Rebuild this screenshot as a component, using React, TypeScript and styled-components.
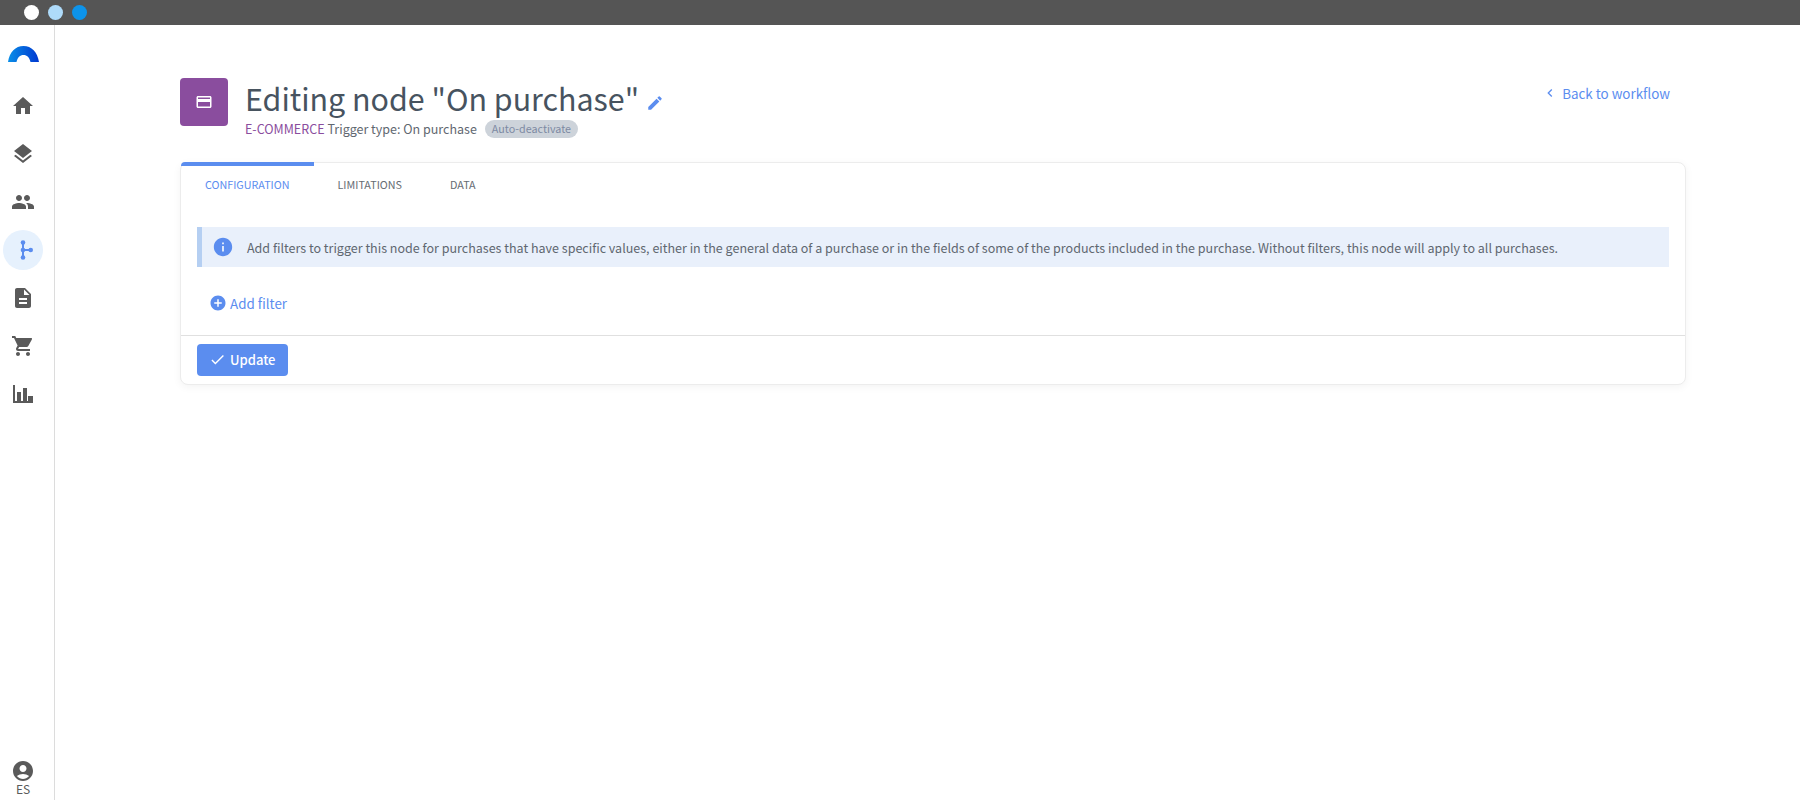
import styled, { createGlobalStyle } from "styled-components";
import {
  MdHome,
  MdLayers,
  MdPeople,
  MdDescription,
  MdShoppingCart,
  MdAccountCircle,
  MdEdit,
  MdInfo,
  MdAddCircle,
  MdCheck,
  MdChevronLeft,
  MdCreditCard,
} from "react-icons/md";

const FONT = `"Noto Sans CJK JP", "Noto Sans", sans-serif`;
const BLUE = "#5b8def";
const GREY = "#5a5a5a";

const GlobalStyle = createGlobalStyle`
  html, body {
    margin: 0;
    padding: 0;
    background: #fff;
  }
  body {
    font-family: ${FONT};
    overflow: hidden;
  }
`;

export default function App() {
  return (
    <>
      <GlobalStyle />
      <Page>
        <TopBar>
          <Dot $color="#ffffff" />
          <Dot $color="#aedbfa" />
          <Dot $color="#0d93ea" />
        </TopBar>
        <Body>
          <Sidebar>
            <Logo viewBox="0 0 31 16">
              <defs>
                <linearGradient id="logoGrad" x1="0" x2="1" y1="0" y2="0">
                  <stop offset="0" stopColor="#0a8fe8" />
                  <stop offset="1" stopColor="#0038d0" />
                </linearGradient>
              </defs>
              <path d="M0 16C1.500 6 7.500 0 15.500 0S29.500 6 31 16H22.500C21.500 11.500 19 9 15.500 9S9.500 11.500 8.500 16Z" fill="url(#logoGrad)" />
            </Logo>
            <NavList>
              <NavItem><MdHome size={24} /></NavItem>
              <NavItem><MdLayers size={24} /></NavItem>
              <NavItem><MdPeople size={24} /></NavItem>
              <NavItem $active>
                <svg width="24" height="24" viewBox="0 0 24 24" fill={BLUE} stroke={BLUE}>
                  <path d="M12 4.500V19.500M12 12H19.700" strokeWidth="2" fill="none" />
                  <circle cx="12" cy="4.500" r="2.300" stroke="none" />
                  <circle cx="12" cy="12" r="2.300" stroke="none" />
                  <circle cx="12" cy="19.500" r="2.300" stroke="none" />
                  <circle cx="19.700" cy="12" r="2.300" stroke="none" />
                </svg>
              </NavItem>
              <NavItem><MdDescription size={24} /></NavItem>
              <NavItem><MdShoppingCart size={24} /></NavItem>
              <NavItem>
                <svg width="24" height="24" viewBox="0 0 24 24" fill={GREY}>
                  <path d="M2 3H4V19H6V10H10V19H12V6H16V19H17V14H22V21H2Z" />
                </svg>
              </NavItem>
            </NavList>
            <UserBlock>
              <UserIcon size={24} />
              <Lang>ES</Lang>
            </UserBlock>
          </Sidebar>
          <Main>
            <Header>
              <NodeIcon>
                <MdCreditCard size={18} color="#fff" />
              </NodeIcon>
              <HeaderText>
                <TitleRow>
                  <Title>Editing node "On purchase"</Title>
                  <EditIcon size={18} />
                </TitleRow>
                <SubRow>
                  <Category>E-COMMERCE</Category>
                  <span>Trigger type: On purchase</span>
                  <Badge>Auto-deactivate</Badge>
                </SubRow>
              </HeaderText>
              <BackLink>
                <MdChevronLeft size={16} />
                <span>Back to workflow</span>
              </BackLink>
            </Header>
            <Card>
              <Tabs>
                <Tab $active>CONFIGURATION</Tab>
                <Tab>LIMITATIONS</Tab>
                <Tab>DATA</Tab>
              </Tabs>
              <CardBody>
                <Notice>
                  <MdInfo size={22} color={BLUE} />
                  <span>
                    Add filters to trigger this node for purchases that have specific values, either in the general data of a purchase or in the fields of some of the products included in the purchase. Without filters, this node will apply to all purchases.
                  </span>
                </Notice>
                <AddFilter>
                  <MdAddCircle size={18} />
                  <span>Add filter</span>
                </AddFilter>
              </CardBody>
              <CardFooter>
                <UpdateButton>
                  <MdCheck size={17} />
                  <span>Update</span>
                </UpdateButton>
              </CardFooter>
            </Card>
          </Main>
        </Body>
      </Page>
    </>
  );
}

const Page = styled.div`
  display: flex;
  flex-direction: column;
  width: 1800px;
  height: 800px;
`;

const TopBar = styled.div`
  display: flex;
  align-items: center;
  gap: 9px;
  height: 25px;
  padding-left: 24px;
  background: #555555;
  flex-shrink: 0;
`;

const Dot = styled.span<{ $color: string }>`
  width: 15px;
  height: 15px;
  border-radius: 50%;
  background: ${({ $color }) => $color};
`;

const Body = styled.div`
  display: flex;
  flex: 1;
  min-height: 0;
`;

const Sidebar = styled.nav`
  display: flex;
  flex-direction: column;
  align-items: center;
  width: 54px;
  border-right: 1px solid #dcdcdc;
  flex-shrink: 0;
  padding-top: 21px;
`;

const Logo = styled.svg`
  width: 31px;
  height: 16px;
  flex-shrink: 0;
  margin-left: -8px;
`;

const NavList = styled.div`
  display: flex;
  flex-direction: column;
  gap: 8px;
  margin-top: 24px;
  margin-left: -8px;
`;

const NavItem = styled.div<{ $active?: boolean }>`
  display: flex;
  align-items: center;
  justify-content: center;
  width: 40px;
  height: 40px;
  border-radius: 50%;
  color: ${GREY};
  background: ${({ $active }) => ($active ? "#e6f1fd" : "transparent")};
`;

const UserBlock = styled.div`
  display: flex;
  flex-direction: column;
  align-items: center;
  margin-top: auto;
  margin-left: -8px;
  color: ${GREY};
  padding-bottom: 4px;
`;

const UserIcon = styled(MdAccountCircle)`
  margin-bottom: -1px;
`;

const Lang = styled.span`
  font-size: 12px;
  line-height: 14px;
`;

const Main = styled.main`
  flex: 1;
  min-width: 0;
  padding: 53px 114px 0 125px;
`;

const Header = styled.header`
  display: flex;
  align-items: flex-start;
  gap: 17px;
`;

const NodeIcon = styled.div`
  display: flex;
  align-items: center;
  justify-content: center;
  width: 48px;
  height: 48px;
  border-radius: 4px;
  background: #8a4d9e;
  flex-shrink: 0;
`;

const HeaderText = styled.div`
  display: flex;
  flex-direction: column;
`;

const TitleRow = styled.div`
  display: flex;
  align-items: center;
  gap: 7px;
  height: 40px;
`;

const Title = styled.h1`
  margin: 0;
  font-size: 30.400px;
  font-weight: 400;
  line-height: 40px;
  color: #47535f;
  white-space: nowrap;
`;

const EditIcon = styled(MdEdit)`
  margin-top: 10px;
  color: ${BLUE};
`;

const SubRow = styled.div`
  display: flex;
  align-items: center;
  gap: 3px;
  margin-top: 2px;
  font-size: 12.500px;
  line-height: 18px;
  color: #5f6770;
  white-space: nowrap;
`;

const Category = styled.span`
  color: #8a4d9e;
`;

const Badge = styled.span`
  margin-left: 5px;
  padding: 0 7px;
  border-radius: 9px;
  background: #cdd3da;
  color: #7d8aa3;
  font-size: 10.750px;
  line-height: 18px;
`;

const BackLink = styled.a`
  display: flex;
  align-items: center;
  gap: 4px;
  margin-left: auto;
  margin-top: 5px;
  margin-right: 16px;
  font-size: 13.400px;
  line-height: 20px;
  color: ${BLUE};
`;

const Card = styled.section`
  margin-top: 24px;
  border: 1px solid #ececec;
  border-radius: 8px;
  box-shadow: 0 2px 8px rgba(0, 0, 0, 0.05);
  background: #fff;
`;

const Tabs = styled.div`
  display: flex;
  height: 40px;
`;

const Tab = styled.div<{ $active?: boolean }>`
  display: flex;
  align-items: center;
  padding: 0 24px;
  font-size: 10.750px;
  color: ${({ $active }) => ($active ? BLUE : "#666c73")};
  border-top: 4px solid ${({ $active }) => ($active ? BLUE : "transparent")};
  border-top-left-radius: 4px;
  border-bottom-right-radius: 2px;
  margin-top: -1px;
`;

const CardBody = styled.div`
  padding: 24px 16px 0;
`;

const Notice = styled.div`
  display: flex;
  align-items: center;
  gap: 13px;
  height: 40px;
  padding-left: 10px;
  border-left: 5px solid #b5cff2;
  background: #e9f0fb;
  font-size: 12.530px;
  color: #5f6770;
  white-space: nowrap;
`;

const AddFilter = styled.div`
  display: flex;
  align-items: center;
  gap: 3px;
  height: 68px;
  padding: 3px 0 0 12px;
  box-sizing: border-box;
  font-size: 13.400px;
  color: ${BLUE};
`;

const CardFooter = styled.div`
  padding: 8px 16px;
  border-top: 1px solid #e0e0e0;
`;

const UpdateButton = styled.button`
  display: flex;
  align-items: center;
  gap: 4px;
  height: 32px;
  padding: 0 13px 1px 12px;
  border: none;
  border-radius: 4px;
  background: ${BLUE};
  color: #fff;
  font-family: ${FONT};
  font-size: 13px;
  font-weight: 500;
`;
